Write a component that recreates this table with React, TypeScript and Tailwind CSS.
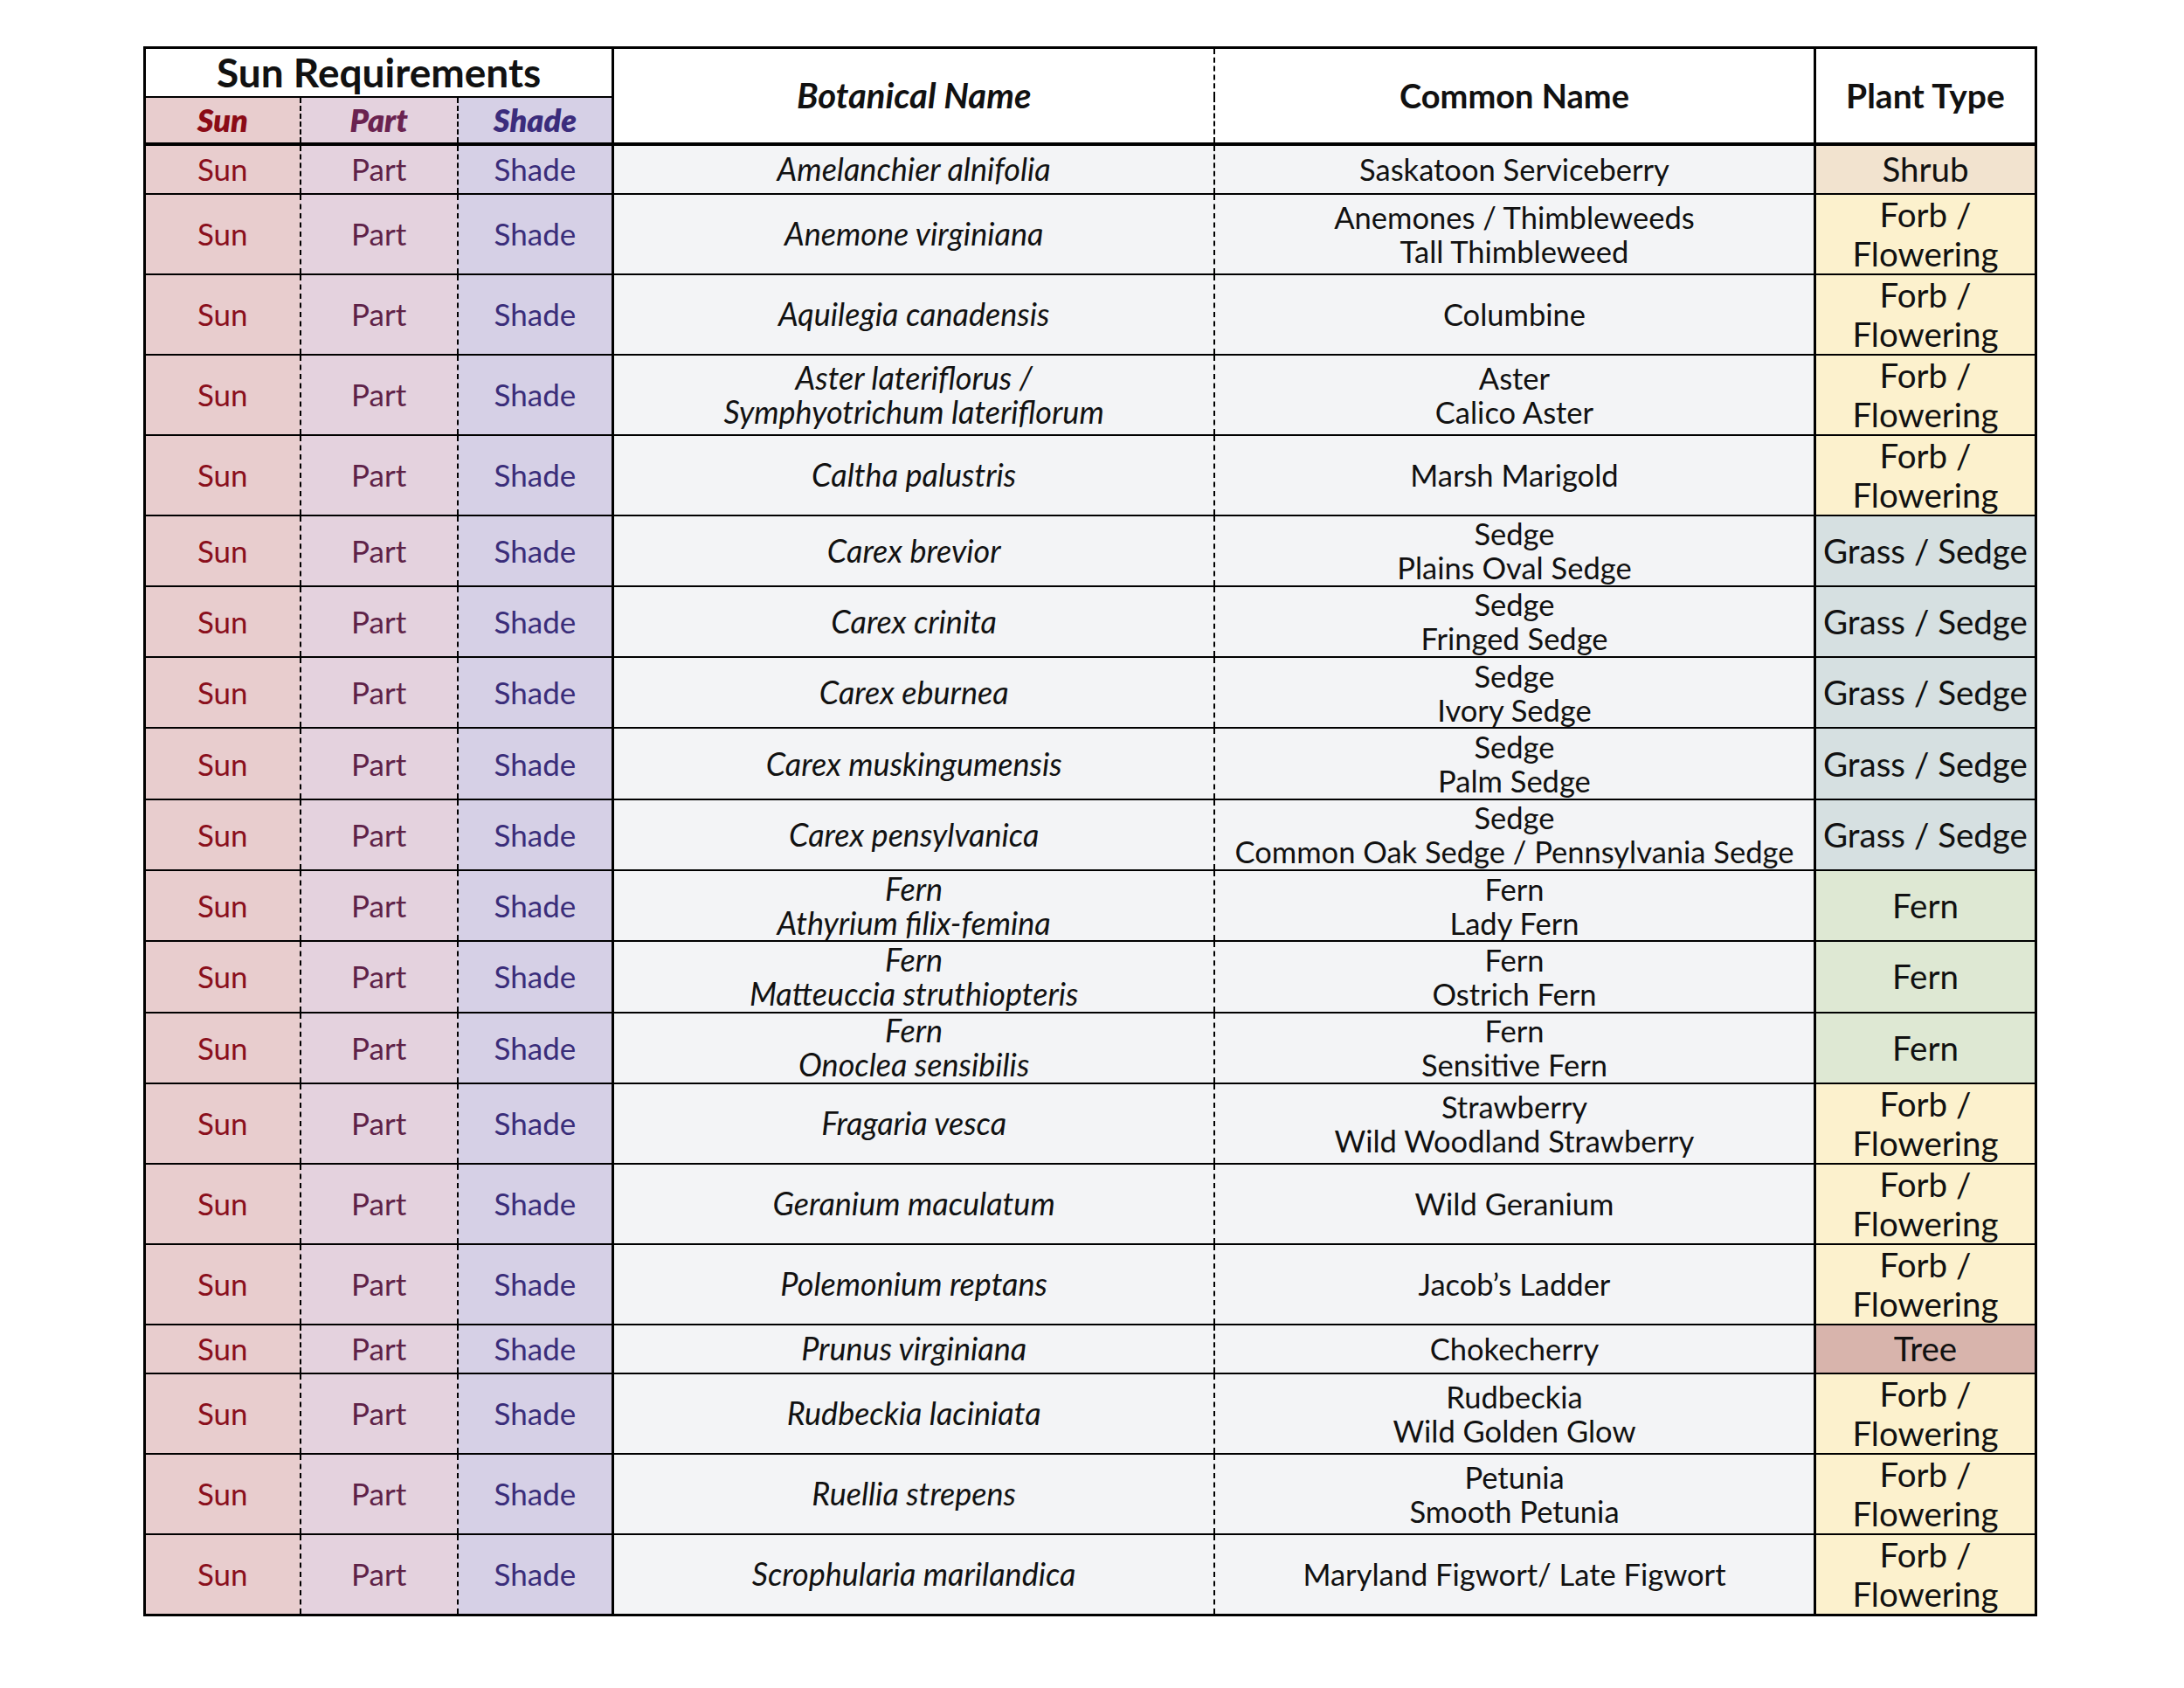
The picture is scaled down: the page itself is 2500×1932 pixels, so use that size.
import React from "react";

type Kind = "shrub" | "forb" | "grass" | "fern" | "tree";

interface Plant {
    botanical: string[];
    common: string[];
    kind: Kind;
}

const plants: Plant[] = [
    { botanical: ["Amelanchier alnifolia"], common: ["Saskatoon Serviceberry"], kind: "shrub" },
    { botanical: ["Anemone virginiana"], common: ["Anemones / Thimbleweeds", "Tall Thimbleweed"], kind: "forb" },
    { botanical: ["Aquilegia canadensis"], common: ["Columbine"], kind: "forb" },
    { botanical: ["Aster lateriflorus /", "Symphyotrichum lateriflorum"], common: ["Aster", "Calico Aster"], kind: "forb" },
    { botanical: ["Caltha palustris"], common: ["Marsh Marigold"], kind: "forb" },
    { botanical: ["Carex brevior"], common: ["Sedge", "Plains Oval Sedge"], kind: "grass" },
    { botanical: ["Carex crinita"], common: ["Sedge", "Fringed Sedge"], kind: "grass" },
    { botanical: ["Carex eburnea"], common: ["Sedge", "Ivory Sedge"], kind: "grass" },
    { botanical: ["Carex muskingumensis"], common: ["Sedge", "Palm Sedge"], kind: "grass" },
    { botanical: ["Carex pensylvanica"], common: ["Sedge", "Common Oak Sedge / Pennsylvania Sedge"], kind: "grass" },
    { botanical: ["Fern", "Athyrium filix-femina"], common: ["Fern", "Lady Fern"], kind: "fern" },
    { botanical: ["Fern", "Matteuccia struthiopteris"], common: ["Fern", "Ostrich Fern"], kind: "fern" },
    { botanical: ["Fern", "Onoclea sensibilis"], common: ["Fern", "Sensitive Fern"], kind: "fern" },
    { botanical: ["Fragaria vesca"], common: ["Strawberry", "Wild Woodland Strawberry"], kind: "forb" },
    { botanical: ["Geranium maculatum"], common: ["Wild Geranium"], kind: "forb" },
    { botanical: ["Polemonium reptans"], common: ["Jacob’s Ladder"], kind: "forb" },
    { botanical: ["Prunus virginiana"], common: ["Chokecherry"], kind: "tree" },
    { botanical: ["Rudbeckia laciniata"], common: ["Rudbeckia", "Wild Golden Glow"], kind: "forb" },
    { botanical: ["Ruellia strepens"], common: ["Petunia", "Smooth Petunia"], kind: "forb" },
    { botanical: ["Scrophularia marilandica"], common: ["Maryland Figwort/ Late Figwort"], kind: "forb" },
];

const kindStyle: Record<Kind, { bg: string; row: string; label: string[] }> = {
    shrub: { bg: "bg-[#f2e3cf]", row: "h-[57px]", label: ["Shrub"] },
    forb: { bg: "bg-[#fcf1cd]", row: "h-[92px]", label: ["Forb /", "Flowering"] },
    grass: { bg: "bg-[#d6e0e1]", row: "h-[81.3px]", label: ["Grass / Sedge"] },
    fern: { bg: "bg-[#dee8d3]", row: "h-[81.3px]", label: ["Fern"] },
    tree: { bg: "bg-[#d8b4ac]", row: "h-[56px]", label: ["Tree"] },
};

const Lines = ({ lines }: { lines: string[] }) => (
    <>
        {lines.map((l, i) => (
            <div key={i}>{l}</div>
        ))}
    </>
);

export default function App() {
    return (
        <div className="min-h-[1932px] w-[2500px] bg-white pt-[53px] pl-[164px] font-['Lato',sans-serif] text-[#111]">
            <table className="table-fixed border-collapse border-[3px] border-black w-[2168px]">
                <colgroup>
                    <col className="w-[178px]" />
                    <col className="w-[180px]" />
                    <col className="w-[178px]" />
                    <col className="w-[688px]" />
                    <col className="w-[687px]" />
                    <col className="w-[253px]" />
                </colgroup>
                <thead>
                    {/* Header */}
                    <tr className="h-[56px]">
                        <th colSpan={3} className="border-[3px] border-b-2 border-black bg-white p-0 text-[46px] font-bold leading-none">
                            Sun Requirements
                        </th>
                        <th rowSpan={2} className="border-[3px] border-r-2 border-b-4 border-black bg-white p-0 text-[40px] font-bold italic" style={{ borderRightStyle: "dashed" }}>
                            Botanical Name
                        </th>
                        <th rowSpan={2} className="border-[3px] border-l-2 border-b-4 border-black bg-white p-0 text-[38px] font-bold" style={{ borderLeftStyle: "dashed" }}>
                            Common Name
                        </th>
                        <th rowSpan={2} className="border-[3px] border-b-4 border-black bg-white p-0 text-[39px] font-bold">
                            Plant Type
                        </th>
                    </tr>
                    <tr className="h-[54px]">
                        <th className="border-2 border-l-[3px] border-b-4 border-black bg-[#e8cdce] p-0 text-[36px] font-extrabold italic leading-none text-[#8b0b16]" style={{ borderRightStyle: "dashed" }}>
                            Sun
                        </th>
                        <th className="border-2 border-b-4 border-black bg-[#e4d2de] p-0 text-[36px] font-extrabold italic leading-none text-[#6a2350]" style={{ borderLeftStyle: "dashed", borderRightStyle: "dashed" }}>
                            Part
                        </th>
                        <th className="border-2 border-r-[3px] border-b-4 border-black bg-[#d6d0e6] p-0 text-[36px] font-extrabold italic leading-none text-[#3b2c7c]" style={{ borderLeftStyle: "dashed" }}>
                            Shade
                        </th>
                    </tr>
                </thead>
                <tbody>
                    {plants.map((p, i) => {
                        const k = kindStyle[p.kind];
                        return (
                            <tr key={i} className={k.row}>
                                <td className="border-2 border-l-[3px] border-black bg-[#e8cdce] p-0 text-center text-[35px] leading-none text-[#8a0f1c]" style={{ borderRightStyle: "dashed" }}>
                                    Sun
                                </td>
                                <td className="border-2 border-black bg-[#e4d2de] p-0 text-center text-[35px] leading-none text-[#5e2248]" style={{ borderLeftStyle: "dashed", borderRightStyle: "dashed" }}>
                                    Part
                                </td>
                                <td className="border-2 border-r-[3px] border-black bg-[#d6d0e6] p-0 text-center text-[35px] leading-none text-[#3a2d7a]" style={{ borderLeftStyle: "dashed" }}>
                                    Shade
                                </td>
                                <td className="border-2 border-l-[3px] border-black bg-[#f3f4f6] p-0 text-center text-[36px] italic leading-[39px]" style={{ borderRightStyle: "dashed" }}>
                                    <Lines lines={p.botanical} />
                                </td>
                                <td className="border-2 border-r-[3px] border-black bg-[#f3f4f6] p-0 text-center text-[34.5px] leading-[39px]" style={{ borderLeftStyle: "dashed" }}>
                                    <Lines lines={p.common} />
                                </td>
                                <td className={`border-2 border-x-[3px] border-black p-0 text-center text-[38.5px] leading-[45px] ${k.bg}`}>
                                    <Lines lines={k.label} />
                                </td>
                            </tr>
                        );
                    })}
                </tbody>
            </table>
        </div>
    );
}
